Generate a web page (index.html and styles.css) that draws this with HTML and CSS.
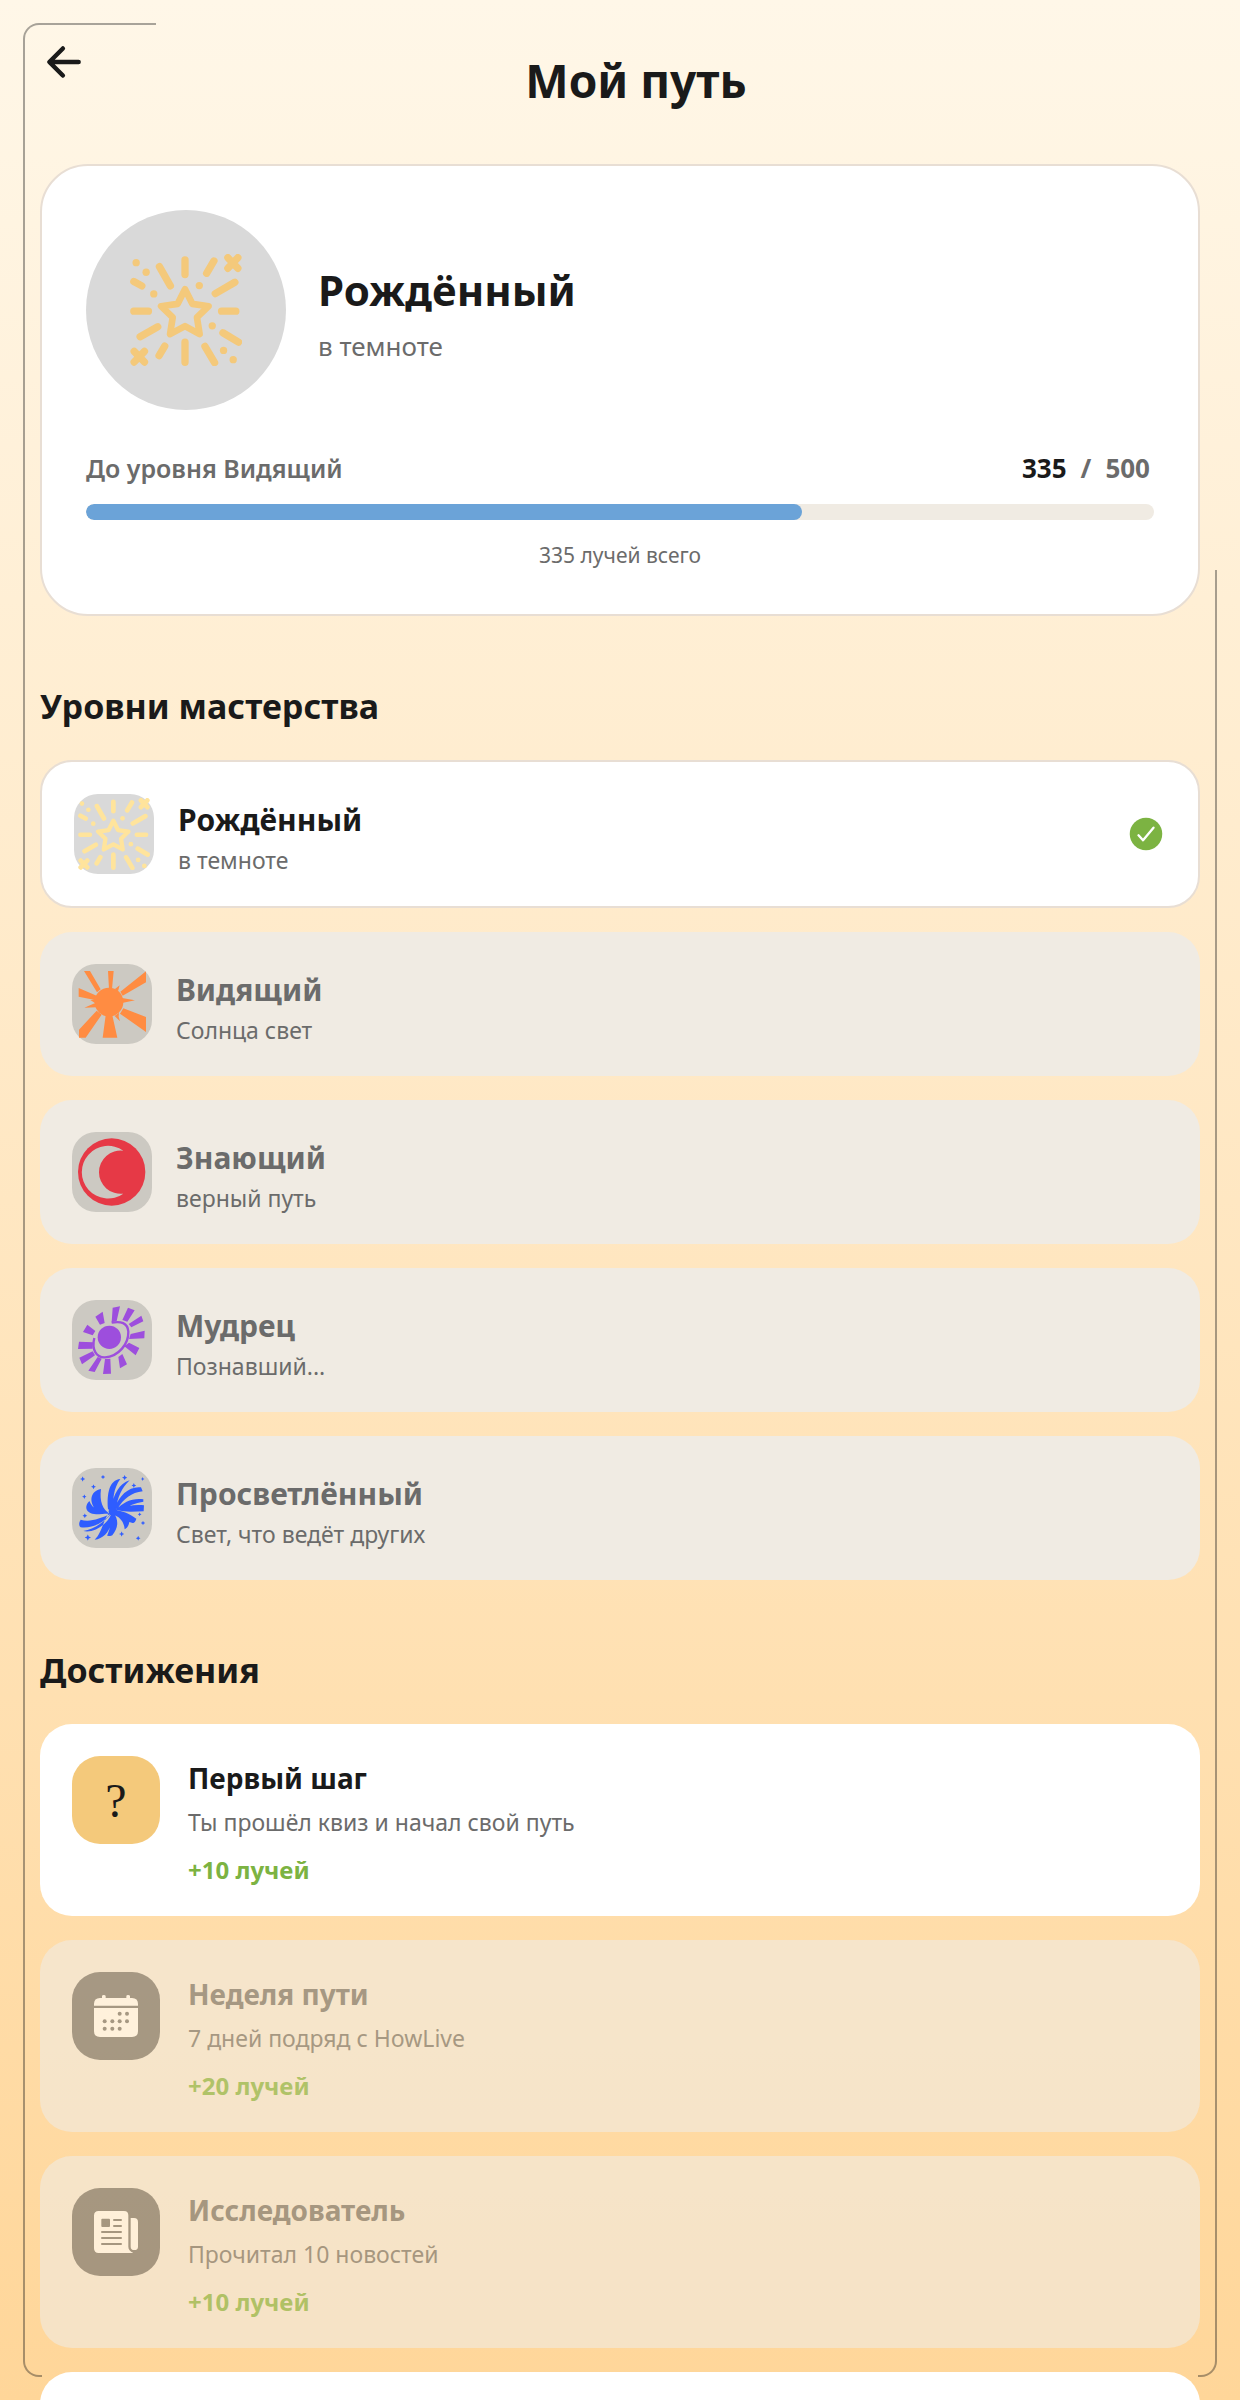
FILE: index.html
```html
<!DOCTYPE html>
<html lang="ru">
<head>
  <meta charset="UTF-8" />
  <meta name="viewport" content="width=device-width, initial-scale=1.0"/>
  <title>Мой путь</title>
  <link rel="stylesheet" href="styles.css">
</head>
<body>
  <svg class="sprite" aria-hidden="true">
    <symbol id="icon-star" viewBox="90 101 336 337">
      <g fill="none" stroke="currentColor" stroke-width="22" stroke-linecap="round" stroke-linejoin="round">
        <path d="M255 119V163M342 122L320 159M178 139L211 197M101 184L125 197M101 273H145M365 273H408M405 186L346 220M173 320L120 350M369 338L416 366M194 378L177 407M255 366V427M315 379L344 428"/>
        <path d="M384 112L414 144M414 112L384 144M102 394L133 426M133 394L102 426"/>
        <path stroke-width="20" d="M255 207L277 251L326 258L291 292L299 342L255 318L210 342L218 292L183 258L233 251Z"/>
      </g>
      <g fill="currentColor">
        <circle cx="108" cy="127" r="11"/><circle cx="138" cy="156" r="11"/><circle cx="161" cy="221" r="11"/>
        <circle cx="298" cy="196" r="11"/><circle cx="337" cy="317" r="11"/><circle cx="371" cy="391" r="11"/>
        <circle cx="400" cy="419" r="11"/>
      </g>
    </symbol>
    <symbol id="spark" viewBox="-10 -10 20 20">
      <path fill="currentColor" d="M0-10L3-3L10 0L3 3L0 10L-3 3L-10 0L-3-3Z"/>
    </symbol>
  </svg>

  <div class="frame frame-left"></div>
  <div class="frame-top"></div>
  <div class="frame frame-right"></div>

  <div class="page">
    <header class="header">
      <button class="back" type="button" aria-label="Назад">
        <svg viewBox="0 0 512 512" fill="none" stroke="currentColor" stroke-width="48" stroke-linecap="round" stroke-linejoin="round">
          <path d="M244 400L100 256L244 112M120 256H412"/>
        </svg>
      </button>
      <h1>Мой путь</h1>
    </header>

    <main>
      <section class="card profile">
        <div class="profile-top">
          <div class="avatar"><svg><use href="#icon-star"/></svg></div>
          <div class="profile-text">
            <p class="profile-name">Рождённый</p>
            <p class="profile-sub">в темноте</p>
          </div>
        </div>
        <div class="progress-row">
          <span>До уровня Видящий</span>
          <span class="progress-count"><b>335</b><span>/</span><span>500</span></span>
        </div>
        <div class="bar"><div class="bar-fill" style="width: 67%"></div></div>
        <p class="total">335 лучей всего</p>
      </section>

      <h2>Уровни мастерства</h2>
      <div class="list">
        <div class="level current">
          <div class="level-icon star"><svg><use href="#icon-star"/></svg></div>
          <div class="level-text">
            <h3>Рождённый</h3>
            <p>в темноте</p>
          </div>
          <svg class="check" viewBox="0 0 512 512">
            <circle cx="256" cy="256" r="208" fill="#7cb342"/>
            <path d="M352 176L218 336L160 272" fill="none" stroke="#fff" stroke-width="30" stroke-linecap="round" stroke-linejoin="round"/>
          </svg>
        </div>

        <div class="level">
          <div class="level-icon">
            <svg viewBox="36 552 240 240" fill="#ff8c42">
              <circle cx="147" cy="666" r="43"/>
              <path d="M144 573H161L156 628H147ZM72 573H90L122 628L111 637ZM56 624L110 647L105 660L56 650ZM258 574V607L188 647L181 635ZM258 711V756L180 701L190 685ZM137 706H157L172 773H128ZM110 692L125 704L77 773H57V749ZM186 654L225 661L186 669ZM73 683L104 670L110 682ZM91 660L106 659V670ZM164 708L177 698L176 710L180 724ZM164 628L179 616L174 634Z"/>
            </svg>
          </div>
          <div class="level-text">
            <h3>Видящий</h3>
            <p>Солнца свет</p>
          </div>
        </div>

        <div class="level">
          <div class="level-icon">
            <svg viewBox="36 36 240 240">
              <circle cx="155" cy="156" r="101" fill="#e63946"/>
              <path d="M190 92A79 79 0 1 0 190 221A65 65 0 1 1 190 92Z" fill="#ccc9c2"/>
            </svg>
          </div>
          <div class="level-text">
            <h3>Знающий</h3>
            <p>верный путь</p>
          </div>
        </div>

        <div class="level">
          <div class="level-icon">
            <svg viewBox="36 540 240 240" fill="#9d4edd">
              <circle cx="148" cy="652" r="35"/>
              <path d="M103 654C94 690 110 713 135 712C175 710 206 672 205 635C203 608 182 603 155 608" fill="none" stroke="#9d4edd" stroke-width="7"/>
              <path d="M158 563L180 559L170 603L155 607ZM204 563L224 571L202 605L187 600ZM244 587L250 604L214 622L206 612ZM254 632L253 655L207 657L212 642ZM238 684L227 706L193 679L207 668ZM201 733L180 745L175 711L187 702ZM153 761L129 762L135 717L151 716ZM104 756L85 752L113 711L125 716ZM66 733L58 713L98 694L105 706ZM54 687L57 665L99 667L98 686ZM69 636L82 614L106 633L98 646ZM106 590L128 575L134 609L120 614Z"/>
            </svg>
          </div>
          <div class="level-text">
            <h3>Мудрец</h3>
            <p>Познавший...</p>
          </div>
        </div>

        <div class="level">
          <div class="level-icon blue">
            <svg viewBox="36 54 240 240" fill="#2f5dff">
              <path d="M123 117C88 124 86 160 112 184L150 192C128 178 118 155 123 117ZM88 153C70 172 78 194 118 193L152 190C118 185 98 178 88 153ZM181 87C148 90 140 130 144 178L160 184C158 150 160 115 181 87ZM209 91C178 100 160 135 154 172L168 176C173 140 185 115 209 91ZM243 112C208 108 178 135 164 174L172 178C190 146 215 128 248 124ZM250 148C220 143 190 155 168 180L186 182C205 167 225 158 250 155ZM252 166C225 162 200 168 170 180C200 188 225 184 251 184Z"/>
              <path d="M162 180C200 183 215 198 229 206C226 216 222 220 218 219L208 216C206 228 200 235 194 238C192 215 180 200 160 194ZM160 188C178 210 174 235 157 256C150 261 145 256 141 258C150 235 156 215 152 190ZM157 188C160 225 140 266 104 269C125 250 128 215 146 190ZM62 209C55 220 57 228 62 232C100 236 130 217 152 192C120 205 90 218 62 209ZM70 243C100 250 140 226 154 192C128 220 100 238 70 243Z"/>
              <circle cx="159" cy="184" r="13"/>
              <use href="#spark" x="60" y="79" width="16" height="16"/>
              <use href="#spark" x="122" y="74" width="14" height="14"/>
              <use href="#spark" x="186" y="75" width="16" height="16"/>
              <use href="#spark" x="242" y="81" width="12" height="12"/>
              <use href="#spark" x="214" y="99" width="15" height="15"/>
              <use href="#spark" x="93" y="103" width="15" height="15"/>
              <use href="#spark" x="66" y="133" width="14" height="14"/>
              <use href="#spark" x="67" y="190" width="15" height="15"/>
              <use href="#spark" x="74" y="253" width="19" height="19"/>
              <use href="#spark" x="177" y="244" width="16" height="16"/>
              <use href="#spark" x="227" y="257" width="15" height="15"/>
              <use href="#spark" x="242" y="212" width="14" height="14"/>
              <use href="#spark" x="233" y="187" width="12" height="12"/>
            </svg>
          </div>
          <div class="level-text">
            <h3>Просветлённый</h3>
            <p>Свет, что ведёт других</p>
          </div>
        </div>
      </div>

      <h2>Достижения</h2>
      <div class="list">
        <div class="achievement">
          <div class="achievement-icon question">?</div>
          <div class="achievement-text">
            <h3>Первый шаг</h3>
            <p class="desc">Ты прошёл квиз и начал свой путь</p>
            <p class="reward">+10 лучей</p>
          </div>
        </div>

        <div class="achievement locked">
          <div class="achievement-icon">
            <svg viewBox="156 96 264 264">
              <path fill="#fff" d="M222 197V192Q222 174 240 174H246V169Q246 165 251 165Q257 165 257 169V174H319V169Q319 165 324 165Q330 165 330 169V174H336Q354 174 354 192V197ZM222 204H354V274Q354 291 336 291H240Q222 291 222 274Z"/>
              <g fill="#6b6b6b">
                <circle cx="299" cy="221" r="6"/><circle cx="321" cy="221" r="6"/>
                <circle cx="254" cy="244" r="6"/><circle cx="277" cy="244" r="6"/><circle cx="299" cy="244" r="6"/><circle cx="321" cy="244" r="6"/>
                <circle cx="254" cy="266" r="6"/><circle cx="277" cy="266" r="6"/><circle cx="299" cy="266" r="6"/>
              </g>
            </svg>
          </div>
          <div class="achievement-text">
            <h3>Неделя пути</h3>
            <p class="desc">7 дней подряд с HowLive</p>
            <p class="reward">+20 лучей</p>
          </div>
        </div>

        <div class="achievement locked">
          <div class="achievement-icon">
            <svg viewBox="156 744 264 264">
              <path fill="#fff" d="M236 813H312Q325 813 325 826V920Q325 932 340 939H236Q222 939 222 925V827Q222 813 236 813ZM332 834H342Q354 834 354 846V920Q354 930 343 930Q332 930 332 920Z"/>
              <rect x="244" y="836" width="26" height="25" rx="3" fill="#6b6b6b"/>
              <path d="M282 840H303M282 858H303M246 876H303M246 894H303M246 912H303" stroke="#6b6b6b" stroke-width="6" stroke-linecap="round"/>
            </svg>
          </div>
          <div class="achievement-text">
            <h3>Исследователь</h3>
            <p class="desc">Прочитал 10 новостей</p>
            <p class="reward">+10 лучей</p>
          </div>
        </div>

        <div class="achievement"></div>
      </div>
    </main>
  </div>
</body>
</html>
```
FILE: styles.css
```css
* {
  box-sizing: border-box;
}
body {
  margin: 0;
  font-family: 'Noto Sans', sans-serif;
  color: #1a1a1a;
  background: linear-gradient(180deg, #fff7e8 0%, #ffe7c2 50%, #ffd699 100%);
}
h1, h2, h3, p {
  margin: 0;
}
.sprite {
  position: absolute;
  width: 0;
  height: 0;
}
.page {
  height: 100vh;
  overflow-y: auto;
  scrollbar-width: none;
  padding: 0 40px;
}

/* thin outline around the screen */
.frame, .frame-top {
  position: fixed;
  border: 0 solid rgba(26, 26, 26, 0.38);
  pointer-events: none;
}
.frame {
  width: 19px;
  bottom: 23px;
}
.frame-left {
  left: 23px;
  top: 23px;
  border-width: 2px 0 2px 2px;
  border-radius: 16px 0 0 16px;
}
.frame-top {
  left: 42px;
  top: 23px;
  width: 114px;
  border-top-width: 2px;
}
.frame-right {
  right: 23px;
  top: 570px;
  border-width: 0 2px 2px 0;
  border-radius: 0 0 16px 0;
}

.header {
  display: grid;
  grid-template-columns: 48px 1fr 16px;
  align-items: start;
  padding: 38px 0 52px;
}
.back {
  width: 48px;
  height: 48px;
  padding: 0;
  border: none;
  background: none;
  color: #1a1a1a;
  cursor: pointer;
}
.back svg {
  display: block;
  width: 48px;
  height: 48px;
}
h1 {
  margin-top: 10px;
  font-size: 46px;
  line-height: 64px;
  text-align: center;
}
h2 {
  margin: 66px 0 30px;
  font-size: 34px;
  line-height: 48px;
}

.card {
  background: #fff;
  border: 2px solid #e8ded4;
  border-radius: 48px;
}
.profile {
  padding: 44px;
}
.profile-top {
  display: flex;
  align-items: center;
  gap: 32px;
  margin-bottom: 40px;
}
.avatar {
  display: flex;
  align-items: center;
  justify-content: center;
  width: 200px;
  height: 200px;
  border-radius: 50%;
  background: #d9d9d9;
  color: #f4c97b;
}
.avatar svg {
  width: 112px;
  height: 112px;
}
.profile-text {
  padding-top: 4px;
}
.profile-name {
  font-size: 42px;
  font-weight: 700;
  line-height: 60px;
}
.profile-sub {
  margin-top: 8px;
  font-size: 26px;
  line-height: 36px;
  color: #6b6b6b;
}
.progress-row {
  display: flex;
  justify-content: space-between;
  margin-bottom: 18px;
  font-size: 25px;
  font-weight: 600;
  line-height: 36px;
  color: #6b6b6b;
}
.progress-count {
  display: flex;
  gap: 14px;
  padding-right: 4px;
  font-size: 26px;
  font-weight: 700;
}
.progress-count b {
  font-weight: 700;
  color: #1a1a1a;
}
.bar {
  height: 16px;
  border-radius: 8px;
  background: #f0ebe3;
  overflow: hidden;
}
.bar-fill {
  height: 100%;
  border-radius: 8px;
  background: #6ba3d8;
}
.total {
  margin-top: 20px;
  font-size: 21px;
  line-height: 30px;
  text-align: center;
  color: #6b6b6b;
}

.list {
  display: flex;
  flex-direction: column;
  gap: 24px;
}
.level {
  display: flex;
  align-items: center;
  gap: 24px;
  padding: 30px 32px;
  border-radius: 32px;
  background: #f0ebe3;
  color: #6b6b6b;
}
.level.current {
  background: #fff;
  border: 2px solid #e8ded4;
}
.level-icon {
  display: flex;
  align-items: center;
  justify-content: center;
  width: 80px;
  height: 80px;
  border-radius: 24px;
  background: #ccc9c2;
}
.level-icon svg {
  width: 80px;
  height: 80px;
}
.level-icon.star {
  background: #d9d9d9;
  color: #ffe49c;
}
.level-icon.star svg {
  width: 72px;
  height: 72px;
}
.level-icon.blue {
  color: #2f5dff;
}
.level-text {
  flex: 1;
  padding-top: 4px;
}
.level h3 {
  font-size: 30px;
  line-height: 48px;
}
.level.current h3 {
  color: #1a1a1a;
}
.level p {
  font-size: 23px;
  line-height: 32px;
  color: #6b6b6b;
}
.check {
  width: 40px;
  height: 40px;
}

.achievement {
  display: flex;
  gap: 28px;
  min-height: 192px;
  padding: 32px 32px 30px;
  border-radius: 32px;
  background: #fff;
}
.achievement-icon {
  display: flex;
  align-items: center;
  justify-content: center;
  width: 88px;
  height: 88px;
  border-radius: 28px;
  background: #6b6b6b;
}
.achievement-icon.question {
  background: #f4c97b;
  font-family: 'Liberation Serif', serif;
  font-size: 48px;
}
.achievement-icon svg {
  width: 88px;
  height: 88px;
}
.achievement-text {
  padding-top: 2px;
}
.achievement h3 {
  font-size: 28px;
  line-height: 40px;
}
.desc {
  margin-top: 6px;
  font-size: 23px;
  line-height: 36px;
  color: #6b6b6b;
}
.reward {
  margin-top: 14px;
  font-size: 24px;
  font-weight: 700;
  line-height: 32px;
  color: #7cb342;
}
.locked {
  background: #f0ebe3;
  opacity: 0.6;
}
.locked h3 {
  color: #6b6b6b;
}
```
